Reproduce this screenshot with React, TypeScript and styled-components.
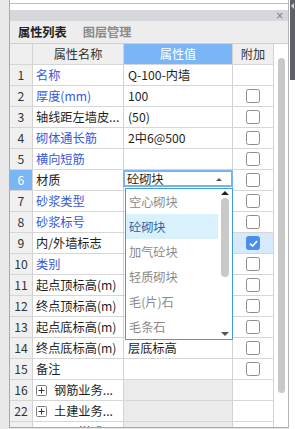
import React from 'react'
import styled, { createGlobalStyle } from 'styled-components'

const GlobalStyle = createGlobalStyle`
  html, body {
    margin: 0;
    padding: 0;
    background: #fff;
  }
  body {
    font-family: "Noto Sans CJK SC", "Microsoft YaHei", sans-serif;
    font-size: 12.2px;
    color: #222;
  }
  * { box-sizing: border-box; }
`

type Check = 'none' | 'off' | 'on'

interface PropRow {
  no: string
  name: string
  blue?: boolean
  value?: string
  check: Check
  group?: boolean
  select?: boolean
}

const rows: PropRow[] = [
  { no: '1', name: '名称', blue: true, value: 'Q-100-内墙', check: 'none' },
  { no: '2', name: '厚度(mm)', blue: true, value: '100', check: 'off' },
  { no: '3', name: '轴线距左墙皮...', value: '(50)', check: 'off' },
  { no: '4', name: '砌体通长筋', blue: true, value: '2中6@500', check: 'off' },
  { no: '5', name: '横向短筋', blue: true, check: 'off' },
  { no: '6', name: '材质', value: '砼砌块', check: 'off', select: true },
  { no: '7', name: '砂浆类型', blue: true, check: 'off' },
  { no: '8', name: '砂浆标号', blue: true, check: 'off' },
  { no: '9', name: '内/外墙标志', check: 'on' },
  { no: '10', name: '类别', blue: true, check: 'off' },
  { no: '11', name: '起点顶标高(m)', check: 'off' },
  { no: '12', name: '终点顶标高(m)', check: 'off' },
  { no: '13', name: '起点底标高(m)', check: 'off' },
  { no: '14', name: '终点底标高(m)', value: '层底标高', check: 'off' },
  { no: '15', name: '备注', check: 'off' },
  { no: '16', name: '钢筋业务...', check: 'none', group: true },
  { no: '22', name: '土建业务...', check: 'none', group: true },
  { no: '25', name: '显示样式', check: 'none', group: true },
]

const options = ['空心砌块', '砼砌块', '加气砼块', '轻质砌块', '毛(片)石', '毛条石']

const App = () => {
  return <>
    <GlobalStyle />
    <Screen>
      <Gutter />
      <Panel>
        <TopStrip />
        <Gap />
        <TitleBar><Close>×</Close></TitleBar>
        <Tabs>
          <Tab $active>属性列表</Tab>
          <Tab>图层管理</Tab>
        </Tabs>
        <TableArea>
          <Grid>
            <Row>
              <HeadCell />
              <HeadCell>属性名称</HeadCell>
              <HeadCell $blue>属性值</HeadCell>
              <HeadCell>附加</HeadCell>
            </Row>
            {rows.map(r => (
              <Row key={r.no}>
                <NumCell $active={r.select}>{r.no}</NumCell>
                <NameCell $blue={r.blue}>
                  {r.group && (
                    <Expand>
                      <svg width="9" height="9" viewBox="0 0 9 9">
                        <path d="M4.5 1.5v6M1.5 4.5h6" stroke="#333" strokeWidth="1" />
                      </svg>
                    </Expand>
                  )}
                  {r.name}
                </NameCell>
                <ValueCell $group={r.group}>
                  {r.select ? (
                    <>
                      <SelectBox>
                        {r.value}
                        <UpTiny />
                      </SelectBox>
                      <DropList>
                        <Options>
                          {options.map(o => (
                            <Option key={o} $selected={o === r.value}>{o}</Option>
                          ))}
                        </Options>
                        <ListScroll>
                          <ArrowUp />
                          <ListThumb />
                          <ArrowDown />
                        </ListScroll>
                      </DropList>
                    </>
                  ) : r.value}
                </ValueCell>
                <AddCell $on={r.check === 'on'}>
                  {r.check !== 'none' && (
                    <CheckBox $on={r.check === 'on'}>
                      {r.check === 'on' && (
                        <svg width="9" height="7" viewBox="0 0 9 7">
                          <path d="M1 3.6 L3.5 6 L8 1.2" stroke="#fff" strokeWidth="1.7" fill="none" />
                        </svg>
                      )}
                    </CheckBox>
                  )}
                </AddCell>
              </Row>
            ))}
          </Grid>
          <ScrollCol>
            <Thumb />
          </ScrollCol>
        </TableArea>
      </Panel>
      <RightStrip>
        <DarkBar><Handle /></DarkBar>
      </RightStrip>
    </Screen>
  </>
}

const Screen = styled.div`
  display: flex;
  align-items: flex-start;
  width: 295px;
  height: 429px;
  overflow: hidden;
  background: #e6e6e6;
`

const Gutter = styled.div`
  width: 9px;
  align-self: stretch;
  background: #e9e9e9;
`

const Panel = styled.div`
  width: 280px;
  height: 428px;
  display: flex;
  flex-direction: column;
  background: #fff;
  border-left: 1px solid #a9a9a9;
  border-right: 1px solid #b4b4b4;
  border-bottom: 1px solid #a9a9a9;
  overflow: hidden;
`

const TopStrip = styled.div`
  height: 4px;
  flex-shrink: 0;
  border-bottom: 1px solid #bdbdbd;
`

const Gap = styled.div`
  height: 6px;
  flex-shrink: 0;
`

const TitleBar = styled.div`
  height: 11px;
  flex-shrink: 0;
  display: flex;
  align-items: center;
  justify-content: flex-end;
  padding-right: 4px;
  background: #d5d7db;
`

const Close = styled.span`
  font-family: "DejaVu Sans", sans-serif;
  font-size: 10px;
  line-height: 10px;
  color: #7d7f83;
`

const Tabs = styled.div`
  height: 23px;
  flex-shrink: 0;
  display: flex;
  background: #ededed;
  border-bottom: 1px solid #cfcfcf;
`

const Tab = styled.div<{ $active?: boolean }>`
  display: flex;
  align-items: center;
  padding: 0 8px 0 8px;
  font-weight: bold;
  color: ${p => p.$active ? '#222' : '#8a8a8a'};
`

const TableArea = styled.div`
  flex: 1;
  display: flex;
  min-height: 0;
`

const Grid = styled.div`
  width: 264px;
  display: flex;
  flex-direction: column;
`

const Row = styled.div`
  display: grid;
  grid-template-columns: 23px 91px 109px 41px;
  height: 21px;
  flex-shrink: 0;
`

const Cell = styled.div`
  border-right: 1px solid #d3d3d3;
  border-bottom: 1px solid #d6d6d6;
  display: flex;
  align-items: center;
  white-space: nowrap;
  overflow: visible;
`

const HeadCell = styled(Cell)<{ $blue?: boolean }>`
  justify-content: center;
  background: ${p => p.$blue ? '#7ab5f5' : '#efefef'};
  color: ${p => p.$blue ? '#fff' : '#333'};
`

const NumCell = styled(Cell)<{ $active?: boolean }>`
  justify-content: center;
  background: ${p => p.$active ? '#7ab5f5' : '#f0f0f0'};
  color: ${p => p.$active ? '#fff' : '#333'};
`

const NameCell = styled(Cell)<{ $blue?: boolean }>`
  padding-left: 3px;
  color: ${p => p.$blue ? '#3858da' : '#1e1e1e'};
  overflow: hidden;
`

const Expand = styled.span`
  width: 11px;
  height: 11px;
  border: 1px solid #7c7c7c;
  border-radius: 1.5px;
  display: inline-flex;
  align-items: center;
  justify-content: center;
  margin-right: 7px;
  flex-shrink: 0;
`

const ValueCell = styled(Cell)<{ $group?: boolean }>`
  position: relative;
  padding-left: 4px;
  background: ${p => p.$group ? '#ebebeb' : '#fff'};
  color: #1e1e1e;
`

const SelectBox = styled.div`
  position: absolute;
  z-index: 5;
  top: 0;
  left: -1px;
  width: 110px;
  height: 17px;
  border: 2px solid #79b2f0;
  background: #fff;
  display: flex;
  align-items: center;
  padding-left: 2px;
  color: #1e1e1e;
`

const UpTiny = styled.span`
  position: absolute;
  right: 9px;
  top: 6px;
  width: 0;
  height: 0;
  border-left: 3px solid transparent;
  border-right: 3px solid transparent;
  border-bottom: 3px solid #555;
`

const DropList = styled.div`
  position: absolute;
  z-index: 6;
  top: 18px;
  left: 1px;
  width: 108px;
  height: 152px;
  border: 1px solid #3d9fd7;
  background: #fff;
  display: flex;
`

const Options = styled.div`
  width: 92px;
  display: flex;
  flex-direction: column;
`

const Option = styled.div<{ $selected?: boolean }>`
  height: 25px;
  display: flex;
  align-items: center;
  padding-left: 3px;
  background: ${p => p.$selected ? '#d9f1fb' : 'transparent'};
  color: ${p => p.$selected ? '#2f63a6' : '#8a8a8a'};
`

const ListScroll = styled.div`
  flex: 1;
  display: flex;
  flex-direction: column;
  align-items: center;
  padding: 2px 0 3px 0;
`

const ArrowUp = styled.span`
  width: 0;
  height: 0;
  border-left: 4px solid transparent;
  border-right: 4px solid transparent;
  border-bottom: 4px solid #222;
`

const ArrowDown = styled.span`
  margin-top: auto;
  width: 0;
  height: 0;
  border-left: 4px solid transparent;
  border-right: 4px solid transparent;
  border-top: 4px solid #555;
`

const ListThumb = styled.div`
  margin-top: 3px;
  width: 8px;
  height: 79px;
  border-radius: 4px;
  background: #c9c9c9;
`

const AddCell = styled(Cell)<{ $on?: boolean }>`
  justify-content: center;
  background: ${p => p.$on ? '#d7e9fc' : '#fff'};
`

const CheckBox = styled.span<{ $on?: boolean }>`
  width: 14px;
  height: 14px;
  border-radius: 2.5px;
  border: 1px solid ${p => p.$on ? '#4a8fec' : '#8e8e8e'};
  background: ${p => p.$on ? '#4a8fec' : '#fff'};
  display: flex;
  align-items: center;
  justify-content: center;
`

const ScrollCol = styled.div`
  flex: 1;
  padding: 14px 0 0 4px;
  background: #fff;
`

const Thumb = styled.div`
  width: 7px;
  height: 335px;
  border-radius: 4px;
  background: #c8c8c8;
`

const RightStrip = styled.div`
  width: 6px;
  align-self: stretch;
  background: #fff;
  padding-left: 1px;
`

const DarkBar = styled.div`
  width: 5px;
  height: 80px;
  background: #5e6268;
  position: relative;
`

const Handle = styled.span`
  position: absolute;
  top: 3px;
  left: 1px;
  width: 0;
  height: 0;
  border-top: 3px solid transparent;
  border-bottom: 3px solid transparent;
  border-right: 3px solid #d0d2d5;
`

export default App
